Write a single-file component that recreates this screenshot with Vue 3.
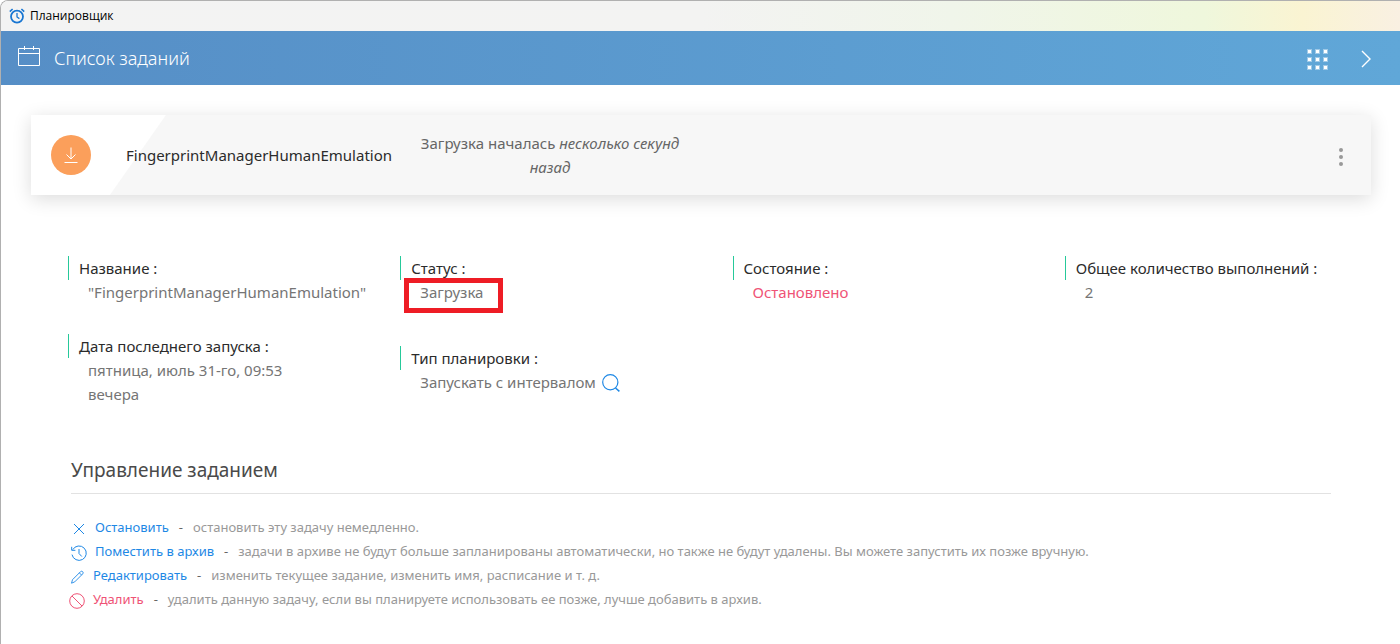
<script setup>
const details = [
  { label: 'Название :', value: '"FingerprintManagerHumanEmulation"' },
  { label: 'Статус :', value: 'Загрузка', marked: true },
  { label: 'Состояние :', value: 'Остановлено', danger: true },
  { label: 'Общее количество выполнений :', value: '2' },
  { label: 'Дата последнего запуска :', value: 'пятница, июль 31-го, 09:53 вечера', narrow: true },
  { label: 'Тип планировки :', value: 'Запускать с интервалом', search: true },
]

const actions = [
  { icon: 'close', name: 'Остановить', text: 'остановить эту задачу немедленно.' },
  {
    icon: 'history',
    name: 'Поместить в архив',
    text: 'задачи в архиве не будут больше запланированы автоматически, но также не будут удалены. Вы можете запустить их позже вручную.',
  },
  { icon: 'pencil', name: 'Редактировать', text: 'изменить текущее задание, изменить имя, расписание и т. д.', tight: true },
  {
    icon: 'ban',
    name: 'Удалить',
    text: 'удалить данную задачу, если вы планируете использовать ее позже, лучше добавить в архив.',
    tight: true,
    danger: true,
  },
]
</script>

<template>
  <div class="window">
    <div class="titlebar">
      <svg class="clock" viewBox="0 0 16 16" width="16" height="16" fill="none" stroke="#1976d2">
        <circle cx="8" cy="8.6" r="6" stroke-width="1.8" />
        <path d="M8 5v4l2.4 1.6" stroke-width="1.3" />
        <path d="M.8 3.6 3.6 1M15.2 3.6 12.4 1" stroke-width="1.6" />
      </svg>
      <span>Планировщик</span>
    </div>

    <header class="header">
      <svg class="calendar" viewBox="0 0 22 20" width="22" height="20" fill="none" stroke="#fff">
        <path d="M.5 2.5h21v17H.5zM.5 7.5h21M6.5 0v4M15.5 0v4" />
      </svg>
      <h1>Список заданий</h1>
      <button class="icon-btn grid-btn" type="button" aria-label="Меню">
        <svg viewBox="0 0 21 21" width="21" height="21" fill="#fff">
          <g v-for="y in 3" :key="y">
            <template v-for="x in 3" :key="x">
              <rect :x="(x - 1) * 8" :y="(y - 1) * 8" width="5" height="5" fill-opacity=".4" />
              <rect :x="(x - 1) * 8 + 1" :y="(y - 1) * 8 + 1" width="3" height="3" />
            </template>
          </g>
        </svg>
      </button>
      <button class="icon-btn next-btn" type="button" aria-label="Далее">
        <svg viewBox="0 0 10 18" width="10" height="18" fill="none" stroke="#fff" stroke-width="1.4">
          <path d="M1 1l8 8-8 8" />
        </svg>
      </button>
    </header>

    <main>
      <section class="card">
        <div class="badge">
          <svg viewBox="0 0 14 16" width="14" height="16" fill="none" stroke="#fff">
            <path d="M7 .5v11.5M2.5 7.5 7 12l4.5-4.5M.5 15.5h13" />
          </svg>
        </div>
        <div class="task-name">FingerprintManagerHumanEmulation</div>
        <p class="task-state">Загрузка началась <em>несколько секунд</em> <em>назад</em></p>
        <button class="icon-btn more" type="button" aria-label="Действия">
          <svg viewBox="0 0 4 18" width="4" height="18" fill="#999">
            <circle cx="2" cy="2" r="2" />
            <circle cx="2" cy="9" r="2" />
            <circle cx="2" cy="16" r="2" />
          </svg>
        </button>
      </section>

      <dl class="details">
        <div v-for="item in details" :key="item.label" class="detail">
          <dt>{{ item.label }}</dt>
          <dd :class="{ danger: item.danger, narrow: item.narrow }">
            <span :class="{ marked: item.marked }">{{ item.value }}</span>
            <button v-if="item.search" class="icon-btn search" type="button" aria-label="Показать расписание">
              <svg viewBox="0 0 18 18" width="18" height="18" fill="none" stroke="#1e88e5">
                <circle cx="8.3" cy="8.3" r="7.6" stroke-width="1.2" />
                <path d="M13.5 14 17.4 17.4" stroke-width="1.5" />
              </svg>
            </button>
          </dd>
        </div>
      </dl>

      <section class="manage">
        <h2>Управление заданием</h2>
        <ul>
          <li v-for="a in actions" :key="a.name" :class="{ tight: a.tight }">
            <a href="#" :class="{ danger: a.danger }">
              <svg viewBox="0 0 16 16" width="16" height="16" fill="none" stroke="currentColor">
                <path v-if="a.icon === 'close'" d="M3 3l10 10M13 3L3 13" />
                <g v-else-if="a.icon === 'history'">
                  <path d="M1.8 4.6A7.2 7.2 0 1 1 1 9.6M.7 1.8v3.5h3.7" />
                  <path d="M8 4v4.5l2.8 3" />
                </g>
                <path v-else-if="a.icon === 'pencil'" d="M2.5 14.2l1-3.5 8-8q1.2-1 2.2 0t0 2.2l-8 8zM10.4 3.9l2.2 2.2" stroke-width=".9" />
                <g v-else>
                  <circle cx="8" cy="8" r="7.3" />
                  <path d="M3 3l10 10" />
                </g>
              </svg>
              <span>{{ a.name }}</span>
            </a>
            <span class="dash">-</span>
            <span class="text">{{ a.text }}</span>
          </li>
        </ul>
      </section>
    </main>
  </div>
</template>

<style>
body {
  margin: 0;
  background: #fff;
}
</style>

<style scoped>
.window {
  box-sizing: border-box;
  min-height: 100vh;
  border-top: 1px solid #b0b0b0;
  border-left: 1px solid #b0b0b0;
  border-top-left-radius: 8px;
  overflow: hidden;
  font-family: "Noto Sans", "Open Sans", sans-serif;
  font-size: 15px;
  line-height: 24px;
  color: #2b2b2b;
}
.titlebar {
  display: flex;
  align-items: center;
  gap: 5px;
  height: 30px;
  padding-left: 8px;
  font-size: 12px;
  font-family: "Open Sans", "Noto Sans", sans-serif;
  color: #000;
  background: linear-gradient(90deg, #f3f3f3 0%, #f3f3f2 50%, #f0f5ea 68%, #eff7dc 86%, #faf4d2 93%, #f9f0e2 100%);
}
.header {
  display: flex;
  align-items: center;
  height: 54px;
  padding: 0 29px 0 17px;
  color: #fff;
  background: linear-gradient(90deg, #568ec6, #60a7d8);
}
.calendar {
  margin-bottom: 4px;
}
h1 {
  margin: 0 auto 0 14px;
  font-size: 18px;
  font-weight: 300;
}
.icon-btn {
  display: flex;
  padding: 0;
  border: 0;
  background: none;
  cursor: pointer;
}
.grid-btn {
  margin-top: 2px;
  margin-right: 33px;
}
.next-btn {
  margin-top: 2px;
}
.card {
  display: flex;
  align-items: center;
  margin: 30px 29px 0 30px;
  padding: 16px 28px 16px 20px;
  background: linear-gradient(125deg, #fff 110px, #f7f7f7 111px);
  box-shadow: 0 4px 18px rgba(0, 0, 0, 0.14);
}
.badge {
  display: flex;
  align-items: center;
  justify-content: center;
  width: 40px;
  height: 40px;
  border-radius: 50%;
  background: #fb9f5b;
}
.task-name {
  width: 262px;
  margin-left: 35px;
}
.task-state {
  width: 290px;
  margin: 0 auto 0 17px;
  text-align: center;
  color: #666;
}
.more {
  margin-top: 4px;
}
.details {
  display: grid;
  grid-template-columns: repeat(4, 1fr);
  align-items: center;
  row-gap: 30px;
  margin: 61px 3px 0 67px;
}
dt {
  padding-left: 10px;
  border-left: 1px solid #26c99a;
}
dd {
  display: flex;
  align-items: center;
  margin: 0;
  padding-left: 20px;
  color: #757575;
}
dd.narrow {
  max-width: 230px;
}
.search {
  margin-top: 2px;
  margin-left: 6px;
}
.danger {
  color: #ef5376;
}
.marked {
  position: relative;
}
.marked::after {
  content: "";
  position: absolute;
  inset: -2px -20px -9px -16px;
  border: 5px solid #ee1c25;
}
.manage {
  margin: 51px 69px 0 70px;
}
h2 {
  margin: 0;
  padding-bottom: 10px;
  border-bottom: 1px solid #e2e2e2;
  font-size: 19px;
  line-height: 26px;
  font-weight: 400;
  color: #4a4a4a;
}
ul {
  margin: 21px 0 0;
  padding: 0;
  list-style: none;
  font-size: 13px;
}
li {
  display: flex;
}
li.tight {
  margin-left: -2px;
}
a {
  display: flex;
  align-items: center;
  gap: 8px;
  color: #1e88e5;
  text-decoration: none;
}
a svg {
  margin-top: 3px;
}
a.danger {
  color: #ef5376;
}
.dash {
  margin: 0 10px;
  color: #666;
}
.text {
  color: #999;
}
</style>
